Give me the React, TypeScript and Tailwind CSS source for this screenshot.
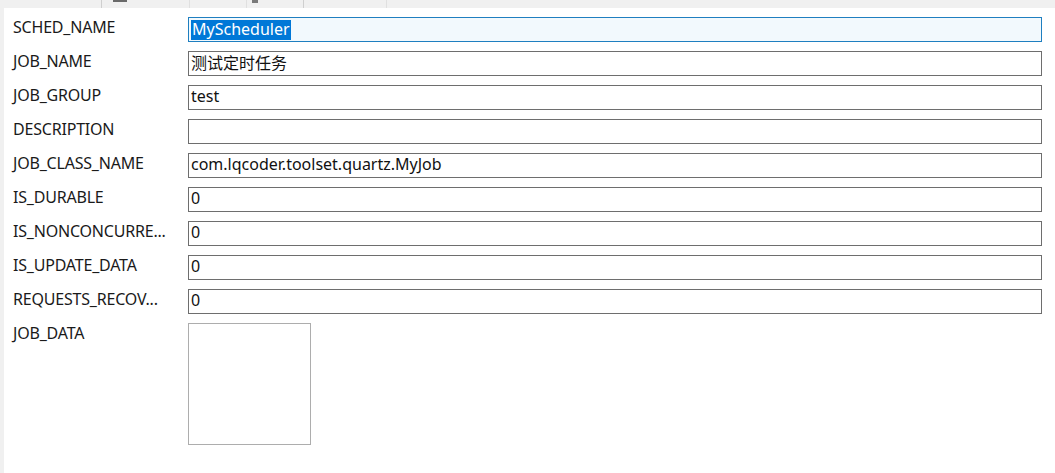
const font = { fontFamily: '"Noto Sans", "Noto Sans CJK SC", sans-serif' };

const rows: { label: string; value: string }[] = [
  { label: "JOB_NAME", value: "测试定时任务" },
  { label: "JOB_GROUP", value: "test" },
  { label: "DESCRIPTION", value: "" },
  { label: "JOB_CLASS_NAME", value: "com.lqcoder.toolset.quartz.MyJob" },
  { label: "IS_DURABLE", value: "0" },
  { label: "IS_NONCONCURRE...", value: "0" },
  { label: "IS_UPDATE_DATA", value: "0" },
  { label: "REQUESTS_RECOV...", value: "0" },
];

function Label({ text }: { text: string }) {
  return (
    <div className="w-[175px] shrink-0 h-[25px] flex items-center pb-[5px] text-[16px] tracking-[-0.2px] text-[#1a1a1a] whitespace-nowrap">
      {text}
    </div>
  );
}

export default function App() {
  return (
    <div className="w-[1055px] h-[473px] bg-[#f0f0f0] flex flex-col overflow-hidden" style={font}>
      {/* tab strip remnants */}
      <div className="h-[8px] flex shrink-0">
        <div className="w-[102px] border-r border-[#cfcfcf]" />
        <div className="w-[88px] border-r border-[#e0e0e0] relative">
          <div className="absolute left-[11px] top-0 w-[14px] h-[2px] bg-[#6a6a6a]" />
        </div>
        <div className="w-[57px] border-r border-[#e0e0e0]" />
        <div className="w-[57px] border-r border-[#cfcfcf] relative">
          <div className="absolute left-[5px] top-0 w-[6px] h-[3px] bg-[#7a7a7a]" />
        </div>
        <div className="w-[83px] border-r border-[#e0e0e0]" />
        <div className="flex-1" />
      </div>

      <div className="flex-1 flex pl-[4px]">
        <div className="flex-1 bg-white pl-[9px] pt-[9px] pr-[13px] flex flex-col gap-[9px]">
          <div className="flex">
            <Label text="SCHED_NAME" />
            <div className="flex-1 h-[25px] border border-[#1f7fc0] bg-[#f2f9fd] flex items-center pl-[2px]">
              <span className="bg-[#0078d7] text-white text-[16px] h-[20px] leading-[18px] px-[1px]">MyScheduler</span>
            </div>
          </div>

          {rows.map((r) => (
            <div key={r.label} className="flex">
              <Label text={r.label} />
              <input
                readOnly
                value={r.value}
                className="flex-1 h-[25px] border border-[#6e6e6e] bg-white pl-[2px] pb-[3px] text-[16px] text-[#111] outline-none"
                style={font}
              />
            </div>
          ))}

          <div className="flex">
            <Label text="JOB_DATA" />
            <textarea
              readOnly
              className="w-[123px] h-[122px] border border-[#adadad] bg-white resize-none outline-none"
            />
          </div>
        </div>
      </div>
    </div>
  );
}
